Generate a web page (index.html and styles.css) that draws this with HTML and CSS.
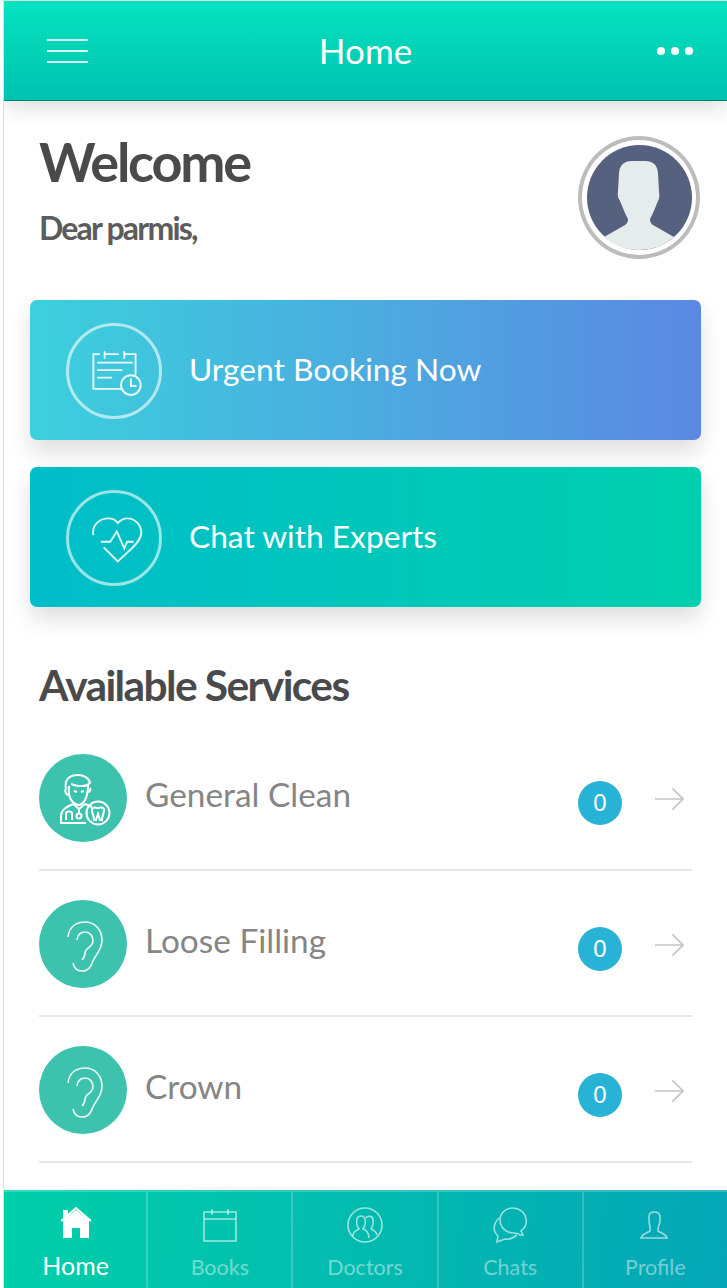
FILE: index.html
```html
<!DOCTYPE html>
<html>
    <head>
        <title>Home</title>
        <meta charset="UTF-8" />
        <meta name="viewport" content="width=device-width, initial-scale=1.0" />
        <link rel="stylesheet" href="styles.css">
    </head>
    <body>
        <div class="app">
            <header class="topbar">
                <div class="topbar-side">
                    <div class="burger"><span></span><span></span><span></span></div>
                </div>
                <div class="topbar-title">Home</div>
                <div class="topbar-side topbar-right">
                    <div class="dots"><span></span><span></span><span></span></div>
                </div>
            </header>

            <main class="content">
                <section class="intro">
                    <div>
                        <h1 class="welcome">Welcome</h1>
                        <p class="dear">Dear parmis,</p>
                    </div>
                    <div class="avatar">
                        <svg viewBox="0 0 105 105" width="105" height="105">
                            <circle cx="52.5" cy="52.5" r="52.5" fill="#56607f"/>
                            <path d="M17 92 L38 80 Q41 78 41 74 L38 68 L33 56 Q30 52 31 46 L32 28 Q33 16 45 16 L58 16 Q70 16 71 28 L72 46 Q73 52 71 56 L66 68 L63 74 Q63 78 66 80 L87 92 Q72 105 52.5 105 Q32 105 17 92 Z" fill="#e6ebec"/>
                        </svg>
                    </div>
                </section>

                <a class="action action-urgent">
                    <span class="action-icon">
                        <svg viewBox="0 0 96 96" width="96" height="96" class="line">
                            <path d="M33 30 H26 V67 H56 M38 30 H53 M59 30 H71 V52"/>
                            <path d="M38 27 V35 M59 27 V35"/>
                            <path d="M30 39 H68 M30 47 H57 M30 55 H46"/>
                            <circle cx="66" cy="63" r="10.5"/>
                            <path d="M66 56 V64 H72"/>
                        </svg>
                    </span>
                    <span class="action-label">Urgent Booking Now</span>
                </a>
                <a class="action action-chat">
                    <span class="action-icon">
                        <svg viewBox="0 0 96 96" width="96" height="96" class="line">
                            <path d="M26 45 C24 34 33 27 42 27 C46 27 50 29 52 32 C55 29 58 27 62 27 C71 27 78 35 77 44 C76 50 72 54 67 59 L52 73 L37 58"/>
                            <path d="M34 52 H44 L51 41 L59 59 L62 52 H69"/>
                        </svg>
                    </span>
                    <span class="action-label">Chat with Experts</span>
                </a>

                <h2 class="services-title">Available Services</h2>

                <ul class="services">
                    <li class="service">
                        <span class="service-icon">
                            <svg viewBox="0 0 88 88" width="88" height="88" class="line service-line">
                                <path d="M27 35 C25 26 30 21 39 21 C45 21 50 24 51 29 L48 31 C44 33 36 32 32 30"/>
                                <path d="M30 32 C29 42 32 49 39 51 C44 51 49 45 49 31"/>
                                <path d="M27 34 C25 37 27 41 30 41 M49 38 C51 38 52 36 51 34"/>
                                <path d="M35 37 L38 38 M42 38 L45 37"/>
                                <path d="M34 50 L40 55 L46 50"/>
                                <path d="M47 69 H22 V62 C22 56 27 53 34 50 M46 50 C49 51 51 52 53 53"/>
                                <path d="M27 66 V59 C27 57 33 57 33 59 V66"/>
                                <path d="M40 55 V60"/>
                                <circle cx="40" cy="62" r="2.5"/>
                                <circle cx="59" cy="59" r="11.5"/>
                                <path d="M53 55 C55 52 57 54 59 54 C61 54 63 52 65 55 C66 58 63 60 63 66 L61 66 L59 60 L57 66 L55 66 C55 60 52 58 53 55 Z"/>
                            </svg>
                        </span>
                        <span class="service-name">General Clean</span>
                        <span class="badge">0</span>
                        <svg class="arrow" viewBox="0 0 30 24" width="29" height="24"><path d="M0 12 H29 M18 1 L29 12 L18 23"/></svg>
                    </li>
                    <li class="service">
                        <span class="service-icon">
                            <svg viewBox="0 0 88 88" width="88" height="88" class="line thin">
                                <path d="M29 37 C30 27 37 22 46 22 C56 22 63 30 63 40 C63 50 57 54 54 61 C52 66 50 71 43 71 C38 71 35 68 34 63"/>
                                <path d="M38 40 C38 35 42 32 46 32 C51 32 54 36 54 41 C54 47 46 48 46 53 C46 56 45 58 43 60"/>
                            </svg>
                        </span>
                        <span class="service-name">Loose Filling</span>
                        <span class="badge">0</span>
                        <svg class="arrow" viewBox="0 0 30 24" width="29" height="24"><path d="M0 12 H29 M18 1 L29 12 L18 23"/></svg>
                    </li>
                    <li class="service">
                        <span class="service-icon">
                            <svg viewBox="0 0 88 88" width="88" height="88" class="line thin">
                                <path d="M29 37 C30 27 37 22 46 22 C56 22 63 30 63 40 C63 50 57 54 54 61 C52 66 50 71 43 71 C38 71 35 68 34 63"/>
                                <path d="M38 40 C38 35 42 32 46 32 C51 32 54 36 54 41 C54 47 46 48 46 53 C46 56 45 58 43 60"/>
                            </svg>
                        </span>
                        <span class="service-name">Crown</span>
                        <span class="badge">0</span>
                        <svg class="arrow" viewBox="0 0 30 24" width="29" height="24"><path d="M0 12 H29 M18 1 L29 12 L18 23"/></svg>
                    </li>
                </ul>
            </main>

            <nav class="tabs">
                <div class="tab tab-active">
                    <svg viewBox="0 0 40 40" width="40" height="40">
                        <path d="M5 16 L20 3 L35 16" fill="none" stroke="#fff" stroke-width="2"/>
                        <path d="M7 15 L20 5 L33 15 V33 H24 V23 H16 V33 H7 Z M7 5 H12 V9 L7 13 Z" fill="#fff"/>
                    </svg>
                    <span>Home</span>
                </div>
                <div class="tab">
                    <svg viewBox="0 0 40 40" width="40" height="40" class="line thin">
                        <rect x="4" y="7" width="32" height="29"/>
                        <path d="M4 14 H36 M12 4 V10 M28 4 V10"/>
                    </svg>
                    <span>Books</span>
                </div>
                <div class="tab">
                    <svg viewBox="0 0 40 40" width="40" height="40" class="line thin">
                        <circle cx="20" cy="20" r="17"/>
                        <path d="M8 31 C8 26 12 25 14 24 C12 21 11 18 12 14 C13 10 19 10 20 14 C21 18 20 21 18 24 C20 25 24 26 24 33"/>
                        <path d="M21 13 C23 10 28 11 28 15 C29 19 27 22 26 24 C28 25 31 26 32 30"/>
                    </svg>
                    <span>Doctors</span>
                </div>
                <div class="tab">
                    <svg viewBox="0 0 40 40" width="40" height="40" class="line thin">
                        <path d="M30 30 H33 L31 26 C35 23 37 19 36 14 C35 7 29 3 23 3 C16 3 10 8 10 15 C10 22 16 28 23 28 C25 28 28 28 30 30 Z"/>
                        <path d="M9 13 C5 17 3 22 5 27 C6 29 7 30 8 31 L7 37 L15 34 C19 35 23 33 27 30"/>
                    </svg>
                    <span>Chats</span>
                </div>
                <div class="tab">
                    <svg viewBox="0 0 40 40" width="40" height="40" class="line thin">
                        <path d="M6 33 C7 29 12 28 15 26 C16 24 14 20 14 15 V12 C14 9 16 7 19 7 C23 7 25 9 25 12 V15 C25 20 22 24 23 26 C26 28 31 29 32 33 Z"/>
                    </svg>
                    <span>Profile</span>
                </div>
            </nav>
        </div>
    </body>
</html>
```

FILE: styles.css
```css
* {
    box-sizing: border-box;
}

body {
    margin: 0;
    background: #fff;
    font-family: Lato, "Open Sans", sans-serif;
}

.app {
    display: flex;
    flex-direction: column;
    height: 1288px;
    margin-left: 3px;
    border-left: 1px solid #ddd;
    border-top: 1px solid #ddd;
    overflow: hidden;
}

/* top bar */
.topbar {
    display: flex;
    align-items: center;
    height: 100px;
    flex-shrink: 0;
    padding: 0 34px;
    background: linear-gradient(180deg, #05e2be, #00c3b0);
    border-bottom: 1px solid #04806f;
    box-shadow: 0 6px 22px rgba(0, 0, 0, 0.14);
    position: relative;
}

.topbar-side {
    flex: 1;
    display: flex;
}

.topbar-right {
    justify-content: flex-end;
}

.burger {
    display: flex;
    flex-direction: column;
    gap: 9px;
    width: 41px;
    margin-left: 9px;
}

.burger span {
    height: 2px;
    background: #d9fbf5;
}

.topbar-title {
    color: #fff;
    font-size: 35px;
    line-height: 1;
}

.dots {
    display: flex;
    gap: 6px;
}

.dots span {
    width: 8px;
    height: 8px;
    border-radius: 50%;
    background: #fff;
}

/* welcome */
.content {
    flex: 1;
    padding: 0 26px;
}

.intro {
    display: flex;
    justify-content: space-between;
    height: 199px;
    padding: 33px 1px 0 9px;
}

.welcome {
    margin: 0;
    color: #4a4a4a;
    font-size: 54px;
    font-weight: 700;
    line-height: 56px;
    letter-spacing: -2.2px;
}

.dear {
    margin: 20px 0 0;
    color: #5c5c5c;
    font-size: 32px;
    font-weight: 700;
    line-height: 36px;
    letter-spacing: -1.8px;
}

.avatar {
    display: flex;
    align-items: center;
    justify-content: center;
    width: 122px;
    height: 123px;
    margin-top: 2px;
    border: 4px solid #bcbcbc;
    border-radius: 50%;
}

/* big buttons */
.action {
    display: flex;
    align-items: center;
    gap: 27px;
    height: 140px;
    margin-bottom: 27px;
    padding-left: 36px;
    border-radius: 7px;
    color: #fff;
    box-shadow: 0 12px 22px rgba(0, 0, 0, 0.13);
}

.action-urgent {
    background: linear-gradient(90deg, #3bd0dc, #5b88e2);
}

.action-chat {
    background: linear-gradient(90deg, #00bdc9, #00d0ad);
}

.action-icon {
    display: flex;
    width: 96px;
    height: 96px;
    margin-top: 2px;
    border: 3px solid rgba(255, 255, 255, 0.6);
    border-radius: 50%;
    align-items: center;
    justify-content: center;
    flex-shrink: 0;
}

.action-label {
    margin-bottom: 2px;
    font-size: 31.7px;
    line-height: 40px;
}

.line {
    fill: none;
    stroke: rgba(255, 255, 255, 0.9);
    stroke-width: 2;
}

.line.thin {
    stroke-width: 1.6;
}

/* services */
.services-title {
    margin: 53px 0 15px 9px;
    color: #4a4a4a;
    font-size: 42.5px;
    font-weight: 700;
    line-height: 50px;
    letter-spacing: -1.6px;
}

.services {
    margin: 0;
    padding: 0;
    list-style: none;
}

.service {
    display: flex;
    align-items: flex-start;
    height: 146px;
    margin: 0 9px;
    padding-top: 29px;
    border-bottom: 2px solid #e6e6e6;
}

.service-icon {
    width: 88px;
    height: 88px;
    border-radius: 50%;
    background: #3dc2ae;
    flex-shrink: 0;
}

.service-line {
    stroke: #fff;
}

.service-name {
    flex: 1;
    margin: 18px 0 0 18px;
    color: #858585;
    font-size: 33.4px;
    line-height: 45px;
}

.badge {
    width: 44px;
    height: 44px;
    margin: 27px 33px 0 0;
    border-radius: 50%;
    background: #28b3d6;
    color: #fff;
    font-family: "Liberation Sans", sans-serif;
    font-size: 24px;
    line-height: 44px;
    text-align: center;
}

.arrow {
    margin: 33px 8px 0 0;
    fill: none;
    stroke: #c4c4c4;
    stroke-width: 1.6;
}

/* bottom tabs */
.tabs {
    display: flex;
    height: 98px;
    flex-shrink: 0;
    background: linear-gradient(95deg, #00cfa9, #04a6b6);
    border-top: 2px solid rgba(255, 255, 255, 0.2);
}

.tab {
    flex: 1;
    display: flex;
    flex-direction: column;
    align-items: center;
    padding-top: 13px;
    border-left: 2px solid rgba(255, 255, 255, 0.2);
    color: rgba(255, 255, 255, 0.45);
    font-size: 21.5px;
    line-height: 30px;
}

.tab:first-child {
    margin-right: -1px;
    border-left: 0;
}

.tab span {
    margin-top: 7px;
}

.tab svg.line {
    stroke: rgba(255, 255, 255, 0.6);
}

.tab-active {
    color: #fff;
    font-size: 25px;
}

.tab-active span {
    margin-top: 5px;
}
```
